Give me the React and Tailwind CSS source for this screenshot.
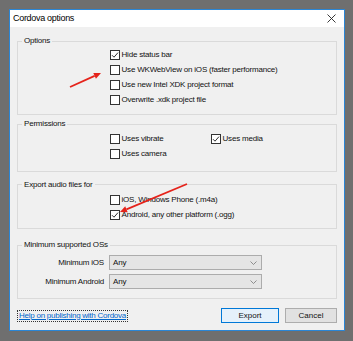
import React from 'react'

const font = { fontFamily: '"Liberation Sans", Arial, sans-serif' }

function Check({ checked, label }) {
  return (
    <label className="flex h-[15px] items-center gap-[1.5px] text-[8px] tracking-[-0.2px] text-[#111]">
      <span className="flex h-[10px] w-[10px] shrink-0 items-center justify-center border border-[#333] bg-white">
        {checked && (
          <svg width="8" height="8" viewBox="0 0 8 8" fill="none">
            <path d="M1 4.2 L3 6.2 L7 1.6" stroke="#333" strokeWidth="1" />
          </svg>
        )}
      </span>
      <span className="whitespace-nowrap">{label}</span>
    </label>
  )
}

function Group({ title, className, children }) {
  return (
    <fieldset className={`mx-[7px] border border-[#dadada] px-[4px] ${className}`}>
      <legend className="px-[2px] text-[8px] leading-[10px] tracking-[-0.2px] text-[#111]">{title}</legend>
      {children}
    </fieldset>
  )
}

function Select({ label }) {
  return (
    <div className="flex h-[15px] items-center gap-[5px] tracking-[-0.2px]">
      <span className="w-[82px] text-right text-[8px] text-[#111]">{label}</span>
      <div className="flex h-[15px] w-[153px] items-center justify-between border border-[#acacac] bg-[#e5e5e5] pl-[3px] pr-[4px] text-[8px] text-[#111]">
        <span>Any</span>
        <svg width="7" height="4" viewBox="0 0 7 4" fill="none">
          <path d="M0.5 0.5 L3.5 3.5 L6.5 0.5" stroke="#777" strokeWidth="0.8" />
        </svg>
      </div>
    </div>
  )
}

function Arrow({ x1, y1, x2, y2 }) {
  const a = Math.atan2(y2 - y1, x2 - x1)
  const len = 7
  const w = 3.2
  const bx = x2 - len * Math.cos(a)
  const by = y2 - len * Math.sin(a)
  const px = -Math.sin(a) * w
  const py = Math.cos(a) * w
  return (
    <g>
      <line x1={x1} y1={y1} x2={bx} y2={by} stroke="#e5231b" strokeWidth="1.8" />
      <polygon points={`${x2},${y2} ${bx + px},${by + py} ${bx - px},${by - py}`} fill="#e5231b" />
    </g>
  )
}

export default function App() {
  return (
    <div className="relative h-[341px] w-[353px] overflow-hidden bg-[#6f6f6f] pl-[9px] pt-[9px]" style={font}>
      <div className="flex h-[322px] w-[336px] flex-col border border-[#2a86d6] bg-[#f0f0f0]">
        <div className="flex h-[17px] shrink-0 items-center justify-between bg-white pl-[3px] pr-[8px] text-[9px] tracking-[-0.3px] text-black">
          <span>Cordova options</span>
          <svg width="9" height="9" viewBox="0 0 9 9" fill="none">
            <path d="M0.5 0.5 L8.5 8.5 M8.5 0.5 L0.5 8.5" stroke="#222" strokeWidth="0.9" />
          </svg>
        </div>

        <Group title="Options" className="mt-[9px] pb-[7px] pt-[1px]">
          <div className="flex flex-col pl-[88px]">
            <Check checked label="Hide status bar" />
            <Check label="Use WKWebView on iOS (faster performance)" />
            <Check label="Use new Intel XDK project format" />
            <Check label="Overwrite .xdk project file" />
          </div>
        </Group>

        <Group title="Permissions" className="mt-[4px] pb-[9px] pt-[2.5px]">
          <div className="grid grid-cols-[101px_auto] pl-[88px]">
            <Check label="Uses vibrate" />
            <Check checked label="Uses media" />
            <Check label="Uses camera" />
          </div>
        </Group>

        <Group title="Export audio files for" className="mt-[8px] pb-[6px] pt-[2.5px]">
          <div className="flex flex-col pl-[88px]">
            <Check label="iOS, Windows Phone (.m4a)" />
            <Check checked label="Android, any other platform (.ogg)" />
          </div>
        </Group>

        <Group title="Minimum supported OSs" className="mt-[11px] pb-[9px] pt-[5px]">
          <div className="flex flex-col gap-[4px]">
            <Select label="Minimum iOS" />
            <Select label="Minimum Android" />
          </div>
        </Group>

        <div className="ml-[7px] mr-[7px] mt-[9px] flex items-center justify-between">
          <span className="border border-dotted border-[#333] px-[1px] text-[8px] leading-[10px] tracking-[-0.25px] text-[#0066cc] underline">
            Help on publishing with Cordova
          </span>
          <div className="flex gap-[6px]">
            <button className="h-[15px] w-[58px] border border-[#0078d7] bg-[#e5f1fb] text-[8px] text-[#111]">Export</button>
            <button className="h-[15px] w-[52px] border border-[#adadad] bg-[#e1e1e1] text-[8px] text-[#111]">Cancel</button>
          </div>
        </div>
      </div>

      <svg className="pointer-events-none absolute left-0 top-0" width="353" height="341">
        <Arrow x1={70} y1={87} x2={101} y2={73} />
        <Arrow x1={187} y1={184} x2={120} y2={212} />
      </svg>
    </div>
  )
}
